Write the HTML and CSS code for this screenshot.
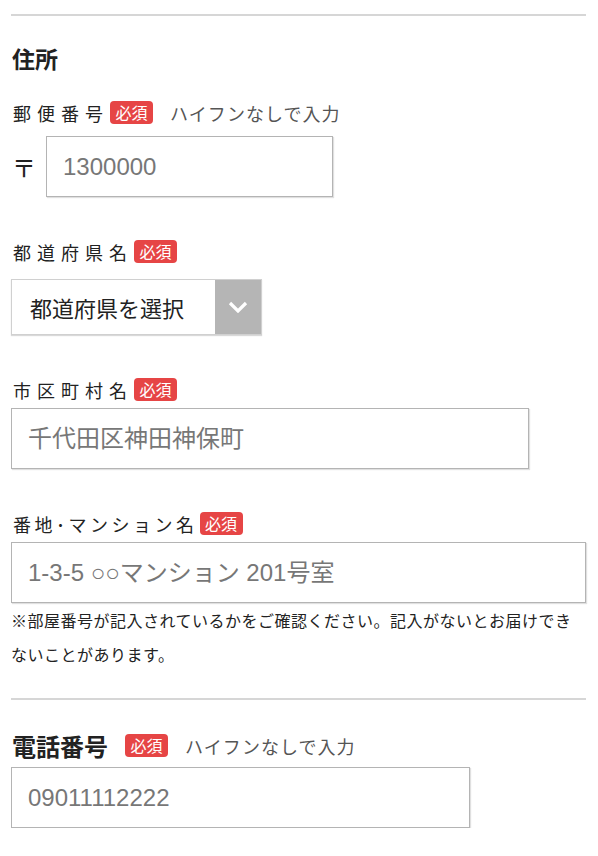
FILE: index.html
```html
<!DOCTYPE html>
<html lang="ja">
<head>
    <meta charset="UTF-8">
    <meta name="viewport" content="width=device-width, initial-scale=1.0">
    <title>住所入力</title>
    <link rel="stylesheet" href="styles.css">
</head>
<body>
    <!-- 住所入力フォーム -->
    <div class="form">
        <hr class="divider">

        <h3 class="section-title">住所</h3>

        <!-- 郵便番号 -->
        <div class="field field-first">
            <div class="label-row">
                <span class="label">郵便番号</span>
                <span class="badge">必須</span>
                <span class="hint">ハイフンなしで入力</span>
            </div>
            <div class="zip-row">
                <span class="zip-mark">〒</span>
                <input type="text" class="text-input zip-input" placeholder="1300000">
            </div>
        </div>

        <!-- 都道府県 -->
        <div class="field">
            <div class="label-row">
                <span class="label">都道府県名</span>
                <span class="badge">必須</span>
            </div>
            <div class="select-wrap">
                <select class="select">
                    <option>都道府県を選択</option>
                    <option>東京都</option>
                </select>
                <div class="select-arrow">
                    <svg width="20" height="12" viewBox="0 0 20 12">
                        <polyline points="2,2 10,10 18,2" fill="none" stroke="#fff" stroke-width="3.2"/>
                    </svg>
                </div>
            </div>
        </div>

        <!-- 市区町村 -->
        <div class="field">
            <div class="label-row tight">
                <span class="label">市区町村名</span>
                <span class="badge">必須</span>
            </div>
            <input type="text" class="text-input city-input" placeholder="千代田区神田神保町">
        </div>

        <!-- 番地・マンション名 -->
        <div class="field">
            <div class="label-row tight">
                <span class="label label-narrow">番地･マンション名</span>
                <span class="badge">必須</span>
            </div>
            <input type="text" class="text-input full-input" placeholder="1-3-5 ○○マンション 201号室">
            <p class="note">※部屋番号が記入されているかをご確認ください。記入がないとお届けできないことがあります。</p>
        </div>

        <hr class="divider divider-tel">

        <!-- 電話番号 -->
        <div class="field field-tel">
            <div class="label-row">
                <span class="label-big">電話番号</span>
                <span class="badge">必須</span>
                <span class="hint">ハイフンなしで入力</span>
            </div>
            <input type="text" class="text-input tel-input" placeholder="09011112222">
        </div>
    </div>
</body>
</html>
```

FILE: styles.css
```css
/* ページ全体 */
body {
    margin: 0;
    font-family: "Noto Sans CJK JP", sans-serif;
    color: #222;
    background: #fff;
}

.form {
    padding: 0 12px 0 11px;
}

/* 区切り線 */
.divider {
    margin: 14px 0 0;
    border: none;
    border-top: 2px solid #d6d6d6;
}

.divider-tel {
    margin-top: 27px;
}

/* 見出し */
.section-title {
    font-size: 23px;
    font-weight: bold;
    line-height: 1;
    margin: 31px 0 0 1px;
}

.field {
    margin-top: 43px;
}

.field-first {
    margin-top: 31px;
}

.field-tel {
    margin-top: 34px;
}

/* ラベル行 */
.label-row {
    display: flex;
    align-items: center;
    height: 23px;
    margin-bottom: 12px;
}

.label-row.tight {
    margin-bottom: 7px;
}

.label {
    font-size: 18px;
    letter-spacing: 6px;
    margin-left: 2px;
    margin-right: 1px;
}

.label-narrow {
    letter-spacing: 3.5px;
    margin-right: 2px;
}

.label-big {
    font-size: 24px;
    font-weight: bold;
    margin-left: 1px;
    margin-right: 17px;
}

/* 必須マーク */
.badge {
    display: inline-block;
    width: 43px;
    height: 23px;
    line-height: 23px;
    text-align: center;
    font-size: 16px;
    color: #fff;
    background-color: #e64545;
    border-radius: 4px;
}

.hint {
    font-size: 18px;
    letter-spacing: 1px;
    color: #555;
    margin-left: 17px;
}

/* テキスト入力 */
.text-input {
    display: block;
    box-sizing: border-box;
    height: 61px;
    padding: 0 16px;
    font-family: "Liberation Sans", "Noto Sans CJK JP", sans-serif;
    font-size: 24px;
    color: #333;
    border: 1px solid #b4b4b4;
    border-radius: 0;
    box-shadow: 1px 1px 1px rgba(0, 0, 0, 0.12);
    outline: none;
}

.text-input::placeholder {
    color: #777;
    opacity: 1;
}

.zip-row {
    display: flex;
    align-items: center;
}

.zip-mark {
    width: 35px;
    font-size: 24px;
    padding-left: 1px;
    box-sizing: border-box;
}

.zip-input {
    width: 287px;
}

.city-input {
    width: 518px;
}

.full-input {
    width: 100%;
}

.tel-input {
    width: 459px;
    margin-top: -2px;
}

/* 都道府県セレクト */
.select-wrap {
    display: flex;
    width: 251px;
    height: 56px;
    box-sizing: border-box;
    border: 1px solid #d0d0d0;
    box-shadow: 0 1px 1px rgba(0, 0, 0, 0.15);
    margin-top: 16px;
}

.select {
    flex: 1;
    appearance: none;
    -webkit-appearance: none;
    border: none;
    background: #fff;
    font-family: "Noto Sans CJK JP", sans-serif;
    font-size: 22px;
    color: #222;
    padding-left: 18px;
    outline: none;
}

.select-arrow {
    width: 46px;
    background-color: #b5b5b5;
    display: flex;
    align-items: center;
    justify-content: center;
}

/* 注意書き */
.note {
    margin: 0;
    font-size: 16px;
    line-height: 34px;
    letter-spacing: 0.5px;
    color: #222;
}
```
